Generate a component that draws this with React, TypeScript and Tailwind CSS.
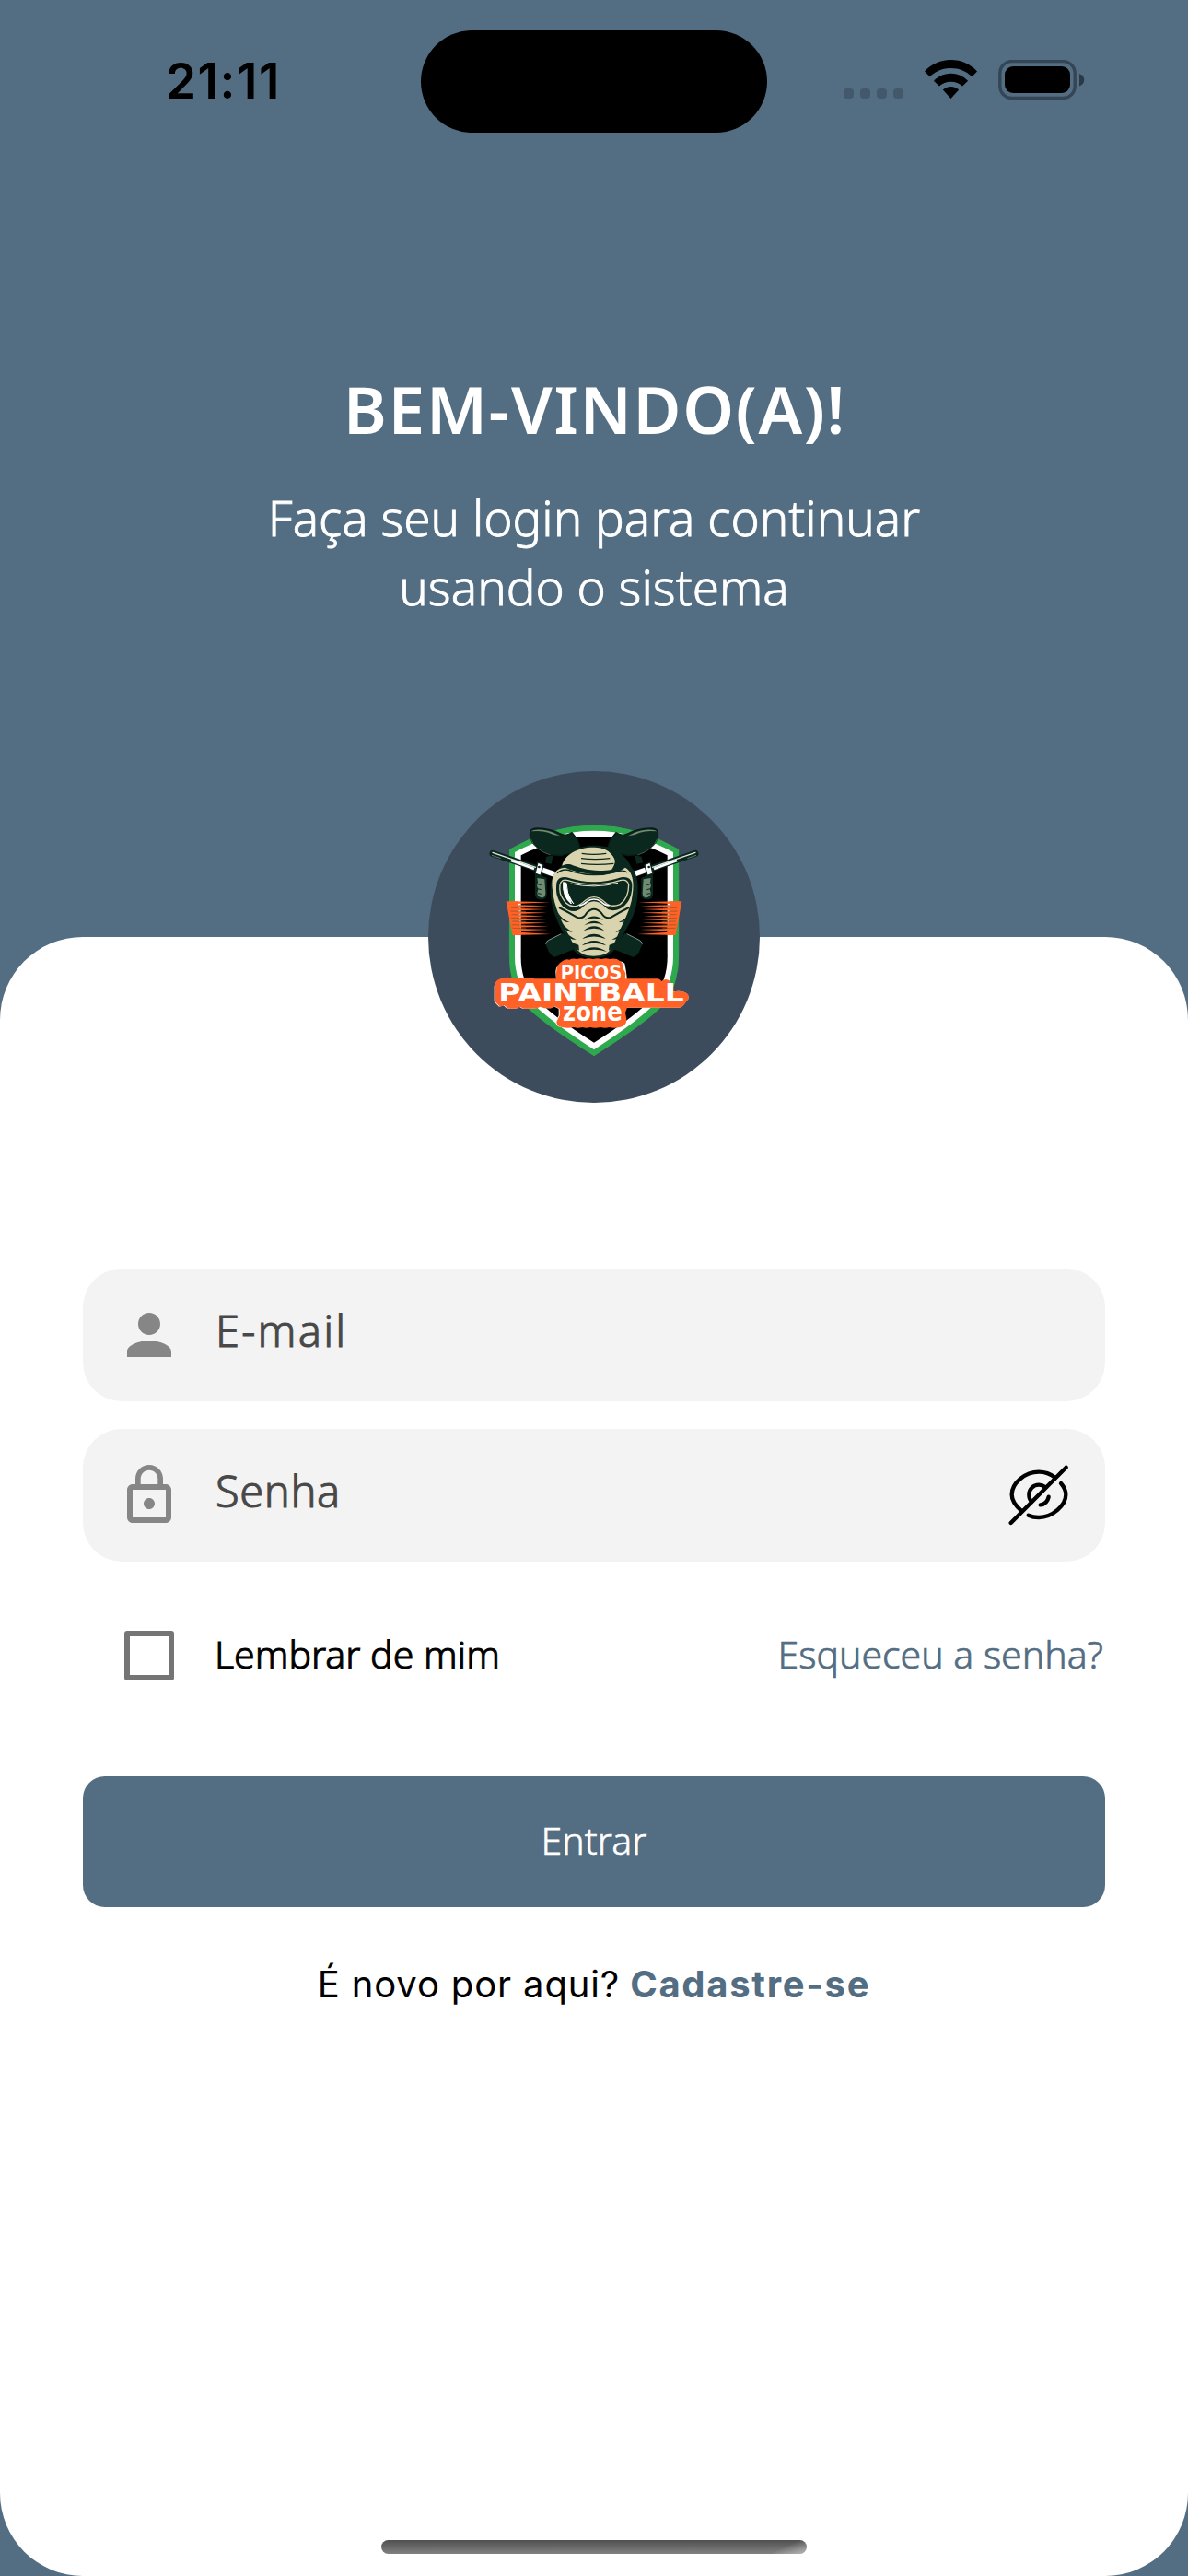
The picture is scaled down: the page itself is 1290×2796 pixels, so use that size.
import type { ReactNode } from "react";

function StatusBar() {
  return (
    <div className="flex h-[177px] w-full items-start">
      <div className="flex h-[177px] w-[457px] items-start justify-center pt-[48px] pl-[28px] font-['Inter',sans-serif] text-[53px] leading-[80px] font-semibold tracking-[1.6px] text-black">
        21:11
      </div>
      <div className="mt-[33px] h-[111px] w-[376px] rounded-full bg-black" />
      <div className="flex h-[177px] flex-1 items-start pt-[65px] pl-[83px]">
        <div className="flex h-[42px] items-end gap-[7px]">
          <span className="size-[11px] rounded-[4px] bg-[#43596b]" />
          <span className="size-[11px] rounded-[4px] bg-[#43596b]" />
          <span className="size-[11px] rounded-[4px] bg-[#43596b]" />
          <span className="size-[11px] rounded-[4px] bg-[#43596b]" />
        </div>
        <svg className="ml-[23px] h-[42px] w-[57px]" viewBox="0 0 172 126">
          <path d="M86 0C52 0 22 14 0 37l17 18C35 37 59 27 86 27s51 10 69 28l17-18C150 14 120 0 86 0Z" />
          <path d="M86 44c-22 0-41 9-56 24l18 18c10-10 23-15 38-15s28 5 38 15l18-18C127 53 108 44 86 44Z" />
          <path d="M86 87c-10 0-19 4-26 11l26 28 26-28c-7-7-16-11-26-11Z" />
        </svg>
        <svg className="ml-[23px] h-[43px] w-[94px]" viewBox="0 0 94 43">
          <rect x="1.8" y="1.5" width="81.4" height="40" rx="13" fill="none" stroke="#344656" strokeWidth="3.4" />
          <rect x="7" y="7" width="71" height="29" rx="9" />
          <path d="M88 15c7 2.500 7 11 0 13.500Z" fill="#2b3945" />
        </svg>
      </div>
    </div>
  );
}

/* Left half of the crossed markers; mirrored for the right side. */
function Marker() {
  return (
    <g>
      <path d="M411 582q2-9 10-13l48-21 40 50-62 26q-10 4-17-6-8-8-11-20Z" fill="#0b281e" />
      <path d="M413 583q2-9 10-13l40-20" fill="none" stroke="#7e9489" strokeWidth="3" />
      <path d="M415 298l22-4-6 28-20-4Z" fill="#0b281e" />
      <path d="M378 355l38 12v58q-4 14-20 13-17 0-18-15Z" fill="#0b281e" />
      <path d="M385 368l24 4 3 46q-2 14-12 14-14-2-15-15l3-12-4-12 3-11Z" fill="#6f8b72" />
      <path d="M386 388l12 3M386 403l12 3M387 418l11 2" stroke="#0b281e" strokeWidth="3" />
      <path d="M240 288l146 50 56 18" stroke="#0b281e" strokeWidth="21" strokeLinecap="round" fill="none" />
      <path d="M240 285l140 48" stroke="#dfe5df" strokeWidth="4" strokeLinecap="round" />
      <path d="M300 311l75 27" stroke="#fff" strokeWidth="8" />
      <path d="M237 294l29 10" stroke="#93a39a" strokeWidth="2" />
      <path d="M396 340l45 16" stroke="#fff" strokeWidth="17" />
      <path d="M387 317l18 8-9 35-18-7Z" fill="#fff" stroke="#0b281e" strokeWidth="4" />
      <circle cx="391" cy="332" r="4" fill="#0b281e" />
      <path d="M362 218q2-12 24-12 45 2 70 16 18 10 34 2l8-4 18 22q8 16 8 38l-60 14q-54 4-86-32-20-20-16-44Z" fill="#0b281e" stroke="#081c16" strokeWidth="4" />
      <path d="M365 216q10-8 38-5 35 5 56 20-22-2-38-11-24-8-56-4Z" fill="#6f8b72" />
      <path d="M364 240q12 36 64 53" fill="none" stroke="#63776a" strokeWidth="2" />
    </g>
  );
}

function SpeedLines() {
  return (
    <g>
      <path d="M284 444h38l10 110h-28Z" fill="#ff6127" />
      <path
        d="M300 444l125 3-125 6ZM300 455l118 4-118 5ZM302 466l108 4-108 5ZM302 477l114 4-114 5ZM303 488l105 4-105 5ZM303 499l112 4-112 5ZM303 510l112 4-112 5ZM304 521l118 4-118 5ZM304 532l116 4-116 5ZM305 543l124 8-124 3Z"
        fill="#ff6127"
      />
      <path d="M300 465l45 1M298 476l50 1M302 487l48 1M300 498l50 1M304 509l45 1M302 520l45 1M304 531l45 1" stroke="#7b5a25" strokeWidth="2" />
    </g>
  );
}

function Word({ x, y, size, length, children }: { x: number; y: number; size: number; length: number; children: string }) {
  return (
    <text
      x={x}
      y={y}
      fontSize={size}
      textLength={length}
      lengthAdjust="spacingAndGlyphs"
      className="font-['DejaVu_Sans',sans-serif] font-bold"
    >
      {children}
    </text>
  );
}

function Lettering() {
  return (
    <g>
      <path
        transform="translate(-3 6)"
        fill="#fff"
        d="M448 668q-1-18 20-30 10-8 22-4H640q22-4 33 6 8 40 8 64l95-10 16 8 17-10 13 10 8 30q24-4 38 2 16 6 12 22l-18 22q-6 6-14 6H678l-6 16 4 22q0 22-22 26H466q-18-2-18-18l10-20v-22l-16-8-10 6H408l-14-5-12 6H340l-11-6-9 6h-30l-12-10-14 4-16-16V714q2-16 22-20H450Z"
      />
      <g fill="#ff6127">
        <path d="M448 668q-1-18 20-30 10-8 22-4 12-6 24-2 14-5 26 0 13-5 27 0 13-5 27 0 15-4 27 0 22-4 33 6 12 6 9 22l10 18-2 20q-4 8-10 14H456q-14-8-8-44Z" />
        <path d="M270 694q22-6 42 2 14-5 28 0 20-6 36 0H774q10-2 16 8 17-14 30 4l8 30q24-4 38 2 16 6 12 22l-18 22q-6 6-14 6H678l-6 16 4 22q0 22-22 26-20 5-34 0-14 5-28 0-20 5-34 0-13 5-26 0-14 5-28 0-20 4-38 0-18-2-18-18l10-20v-22l-16-8-10 6H408l-14-5-12 6H340l-11-6-9 6h-30l-12-10-14 4-16-16V714q2-16 22-20Z" />
      </g>
      <g fill="#fff">
        <Word x={461} y={697} size={65} length={200}>PICOS</Word>
        <Word x={259} y={770} size={78} length={604}>PAINTBALL</Word>
        <Word x={468} y={834} size={83} length={194}>zone</Word>
      </g>
    </g>
  );
}

function PaintballLogo() {
  return (
    <svg className="size-[360px]" viewBox="30 20 1080 1080" role="img" aria-label="Picos Paintball Zone">
      <circle cx="570" cy="560" r="540" fill="#3d4c5c" />
      <path d="M296 275Q430 197 570 197T845 275V610Q848 720 790 786 735 842 570 946 405 842 350 786 292 720 295 610Z" fill="#2fa94d" stroke="#2fa94d" strokeWidth="3" strokeLinejoin="round" />
      <path d="M312 284Q440 214 570 214T828 284V615Q830 705 778 768 720 830 570 927 420 830 362 768 310 705 312 615Z" fill="#fff" />
      <path d="M332 294Q450 233 570 233T809 294V612Q812 700 765 754 710 815 570 904 430 815 375 754 329 700 332 612Z" />
      <SpeedLines />
      <g transform="translate(1140 0) scale(-1 1)">
        <SpeedLines />
      </g>
      <Marker />
      <g transform="translate(1140 0) scale(-1 1)">
        <Marker />
      </g>

      {/* Mask */}
      <path d="M570 262c62 0 102 26 122 72 22 24 24 60 18 108-6 50-34 90-60 136-14 32-34 50-80 50s-62-14-82-50c-28-46-50-90-58-140-6-52 0-80 32-106 18-44 48-70 108-70Z" fill="#0b281e" />
      <path d="M466 328c8-36 48-60 104-60 30 0 56 12 66 34 6 12 0 26-8 38-54 12-104-4-134-16-10-2-20 0-28 4Z" fill="#dad4ae" />
      <path d="M604 272c36 10 62 32 72 58l-34 4c2-26-14-48-38-62Z" fill="#0b281e" />
      <path d="M530 288q38 6 80 0M528 304q45 6 94 0M528 321q50 6 106 0" stroke="#0b281e" strokeWidth="4" fill="none" />
      <path d="M434 400c-4-38 8-64 42-66 60 26 150 34 196 0 24 14 30 48 23 90-5 48-32 90-52 140-18 44-30 58-74 58s-58-20-78-62c-26-50-52-96-57-160Z" fill="#dad4ae" />
      <path d="M450 352q22-20 52-4 70 20 140 0 26-8 36 2" stroke="#0b281e" strokeWidth="4" fill="none" />
      <path d="M448 384q6-24 34-18 88 30 176 0 30-6 36 20 2 54-32 78-36 20-56-2-18-18-36-18t-36 18c-22 22-44 16-66-2-24-30-22-54-20-76Z" fill="#0b281e" />
      <path d="M459 390q4-20 26-14 85 26 170 0 24-6 28 14 0 44-28 64-30 12-48-6-20-18-37-18t-37 18c-20 16-38 16-54 2-22-28-22-40-20-60Z" fill="#0b281e" stroke="#dad4ae" strokeWidth="4" />
      <path d="M494 386q76 18 154-2" stroke="#e9ebdd" strokeWidth="3" fill="none" />
      <path d="M470 382q-4 46 26 70-14-34-16-68ZM486 418q4 22 18 34" stroke="#fff" strokeWidth="3" fill="#fff" />
      <path d="M522 458q14-2 26-14 22-14 44 0 14 14 28 14" stroke="#fff" strokeWidth="5" fill="none" />
      <path d="M456 464q28 14 58 32 20 8 32-14 24-26 48 0 14 22 32 14 30-18 58-32" stroke="#0b281e" strokeWidth="6" fill="none" strokeLinejoin="round" />
      <g fill="#0b281e">
        <path d="M540 505q30-25 60 0-30-12-60 0ZM538 522q32-28 64 0-32-14-64 0ZM536 540q34-30 68 0-34-16-68 0ZM532 566q38-32 76 0-38-15-76 0ZM530 588q40-32 80 0-40-15-80 0ZM528 608q42-28 84 0-42-14-84 0Z" />
        <path d="M452 480q14 24 38 32-16 2-32-14ZM464 512q12 18 36 32-22-2-32-18ZM478 544q14 16 34 24-18 2-28-10ZM494 574q12 8 26 12l2 18q-20-8-28-30ZM688 480q-14 24-38 32 16 2 32-14ZM676 512q-12 18-36 32 22-2 32-18ZM662 544q-14 16-34 24 18 2 28-10ZM646 574q-12 8-26 12l-2 18q20-8 28-30Z" />
      </g>
      <Lettering />
    </svg>
  );
}

function PersonIcon() {
  return (
    <svg className="size-[72px]" viewBox="0 0 24 24" fill="#868686">
      <path d="M12 12c2.210 0 4-1.790 4-4s-1.790-4-4-4-4 1.790-4 4 1.790 4 4 4zm0 2c-2.670 0-8 1.340-8 4v2h16v-2c0-2.660-5.330-4-8-4z" />
    </svg>
  );
}

function LockIcon() {
  return (
    <svg className="size-[72px]" viewBox="0 0 24 24" fill="#868686">
      <path d="M12 17c1.100 0 2-.9 2-2s-.9-2-2-2-2 .9-2 2 .9 2 2 2zm6-9h-1V6c0-2.760-2.240-5-5-5S7 3.240 7 6v2H6c-1.100 0-2 .9-2 2v10c0 1.100.9 2 2 2h12c1.100 0 2-.9 2-2V10c0-1.100-.9-2-2-2zM8.900 6c0-1.710 1.390-3.100 3.100-3.100s3.100 1.390 3.100 3.100v2H8.900V6zM18 20H6V10h12v10z" />
    </svg>
  );
}

function EyeOffIcon() {
  return (
    <svg className="h-[66px] w-[66px]" viewBox="946 209 198 198" fill="none" stroke="#000" strokeWidth="13" strokeLinecap="round" strokeLinejoin="round">
      <path d="M954 398 1134 217" />
      <path d="M1098 250Q1074 232 1045 232C1000 232 957 268 957 306Q957 332 988 358" />
      <path d="M1117 269Q1133 287 1133 306C1133 340 1090 380 1045 380Q1026 380 1011 373" />
      <path d="M1066 281Q1056 274 1045 274A32 32 0 0 0 1013 306Q1013 320 1021 329" />
      <path d="M1077 313Q1072 336 1050 339" />
    </svg>
  );
}

function Field({ icon, children, trailing }: { icon: ReactNode; children: ReactNode; trailing?: ReactNode }) {
  return (
    <div className="flex h-[144px] items-center rounded-[42px] bg-[#f3f3f3] pr-[39px] pl-[36px]">
      {icon}
      <div className="flex-1 pb-[10px] pl-[36px] text-[47px] leading-[64px] text-[#484848] [-webkit-text-stroke:1px_#484848]">
        {children}
      </div>
      {trailing}
    </div>
  );
}

export default function App() {
  return (
    <div className="flex h-[2796px] w-[1290px] flex-col overflow-hidden bg-[#536d82] font-['Noto_Sans',sans-serif] font-light">
      <StatusBar />
      <header className="flex h-[840px] flex-col items-center pt-[219px] text-center text-white">
        <h1 className="h-[96px] pl-[2px] text-[71px] leading-[96px] font-semibold tracking-[1.7px]">BEM-VINDO(A)!</h1>
        <p className="mt-[32px] text-[53px] leading-[75px] [-webkit-text-stroke:0.8px_white]">
          Faça seu login para continuar
          <br />
          usando o sistema
        </p>
      </header>

      <main className="flex flex-1 flex-col rounded-[90px] bg-white px-[90px]">
        <div className="-mt-[180px] flex h-[360px] justify-center">
          <PaintballLogo />
        </div>

        <form className="mt-[180px] flex flex-col">
          <div className="flex flex-col gap-[30px]">
            <Field icon={<PersonIcon />}>
              <span className="tracking-[2.2px]">E-mail</span>
            </Field>
            <Field icon={<LockIcon />} trailing={<EyeOffIcon />}>
              <span className="tracking-[0.6px]">Senha</span>
            </Field>
          </div>

          <div className="mt-[71px] flex h-[62px] items-center text-[41px] leading-[56px]">
            <span className="ml-[45px] size-[54px] rounded-[3px] border-[6px] border-[#757575]" />
            <span className="flex-1 pb-[5px] pl-[44px] text-black [-webkit-text-stroke:1px_black]">Lembrar de mim</span>
            <a className="pr-[2px] pb-[5px] text-[#536d82] [-webkit-text-stroke:0.7px_#536d82]">Esqueceu a senha?</a>
          </div>

          <button
            type="button"
            className="mt-[100px] h-[142px] rounded-[24px] bg-[#536d82] pb-[3px] text-[41px] tracking-[0.1px] text-white [-webkit-text-stroke:0.6px_white]"
          >
            Entrar
          </button>
        </form>

        <p className="mt-[54px] flex justify-center gap-[11px] font-['Inter',sans-serif] text-[40px] leading-[60px] font-normal text-black">
          <span className="tracking-[0.86px]">É novo por aqui?</span>
          <a className="font-bold tracking-[1.7px] text-[#536d82]">Cadastre-se</a>
        </p>

        <div className="mt-auto mb-[24px] h-[15px] w-[462px] self-center overflow-hidden rounded-full bg-gradient-to-b from-[#505050] to-[#828282]">
          <div className="ml-auto h-full w-[36px] bg-gradient-to-br from-transparent from-40% to-white/45" />
        </div>
      </main>
    </div>
  );
}
